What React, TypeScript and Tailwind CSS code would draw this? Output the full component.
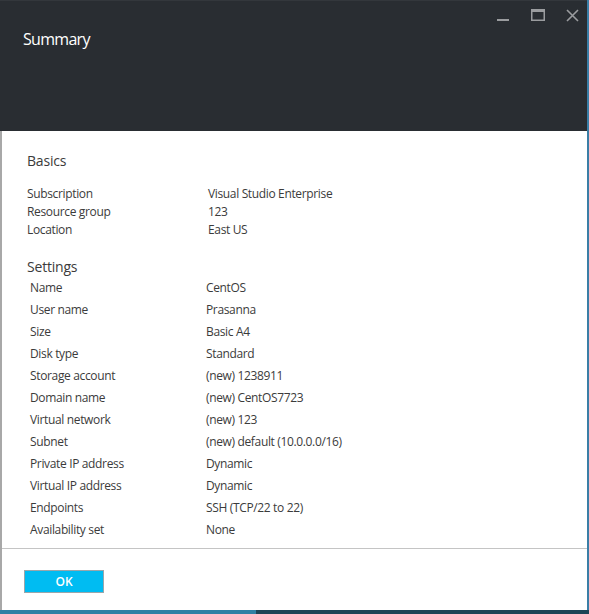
import React from "react";

const basics: [string, string][] = [
  ["Subscription", "Visual Studio Enterprise"],
  ["Resource group", "123"],
  ["Location", "East US"],
];

const settings: [string, string][] = [
  ["Name", "CentOS"],
  ["User name", "Prasanna"],
  ["Size", "Basic A4"],
  ["Disk type", "Standard"],
  ["Storage account", "(new) 1238911"],
  ["Domain name", "(new) CentOS7723"],
  ["Virtual network", "(new) 123"],
  ["Subnet", "(new) default (10.0.0.0/16)"],
  ["Private IP address", "Dynamic"],
  ["Virtual IP address", "Dynamic"],
  ["Endpoints", "SSH (TCP/22 to 22)"],
  ["Availability set", "None"],
];

export default function App() {
  return (
    <div
      className="w-[589px] h-[614px] flex flex-col bg-white overflow-hidden"
      style={{ fontFamily: '"Open Sans", "Noto Sans", sans-serif' }}
    >
      <div className="flex flex-1 min-h-0">
        <div className="flex-1 flex flex-col min-w-0">
          {/* Header */}
          <div className="h-[131px] bg-[#292d32] relative border-t border-[#33373c]">
            <div className="pl-[23px] pt-[27px] text-[16px] leading-[22px] text-white tracking-[-0.7px]">
              Summary
            </div>
            <div className="absolute top-[7px] right-[8px] flex items-center gap-[21px]">
              <svg width="13" height="14" viewBox="0 0 13 14">
                <rect x="0" y="11" width="12" height="2" fill="#9a9c9f" />
              </svg>
              <svg width="14" height="12" viewBox="0 0 14 12">
                <rect x="0.75" y="0.75" width="12.5" height="10.5" fill="none" stroke="#9a9c9f" strokeWidth="1.5" />
                <rect x="0" y="0" width="14" height="3" fill="#9a9c9f" />
              </svg>
              <svg width="13" height="13" viewBox="0 0 13 13">
                <path d="M1 1 L12 12 M12 1 L1 12" stroke="#9a9c9f" strokeWidth="1.6" />
              </svg>
            </div>
          </div>
          {/* Body */}
          <div className="flex-1 flex flex-col border-l-2 border-[#a8a8a8] text-[#3b3b3b]">
            <div className="pl-[25px] pt-[20px] pb-[7px] border-b border-[#c4c4c4]">
              <div className="text-[14px] leading-[20px] tracking-[-0.2px]">Basics</div>
              <div className="mt-[14px] text-[12px] tracking-[-0.35px]">
                {basics.map(([k, v]) => (
                  <div key={k} className="flex h-[18px] leading-[18px]">
                    <div className="w-[181px]">{k}</div>
                    <div>{v}</div>
                  </div>
                ))}
              </div>
              <div className="mt-[18px] text-[14px] leading-[20px] tracking-[-0.2px]">Settings</div>
              <div className="text-[12px] tracking-[-0.35px] pl-[3px]">
                {settings.map(([k, v]) => (
                  <div key={k} className="flex h-[22px] leading-[22px]">
                    <div className="w-[176px]">{k}</div>
                    <div>{v}</div>
                  </div>
                ))}
              </div>
            </div>
            <div className="flex-1 pl-[22px] pt-[19px]">
              <button className="w-[80px] h-[23px] bg-[#00bcf2] border border-[#9aa6ab] text-white text-[12px] font-semibold leading-[21px] text-center">
                OK
              </button>
            </div>
          </div>
        </div>
        <div className="w-[2px] bg-[#3a7ea6]" />
      </div>
      <div className="h-[4px] flex">
        <div className="w-[256px] bg-[#2e80a4]" />
        <div className="flex-1 bg-[#1c4456]" />
      </div>
    </div>
  );
}
